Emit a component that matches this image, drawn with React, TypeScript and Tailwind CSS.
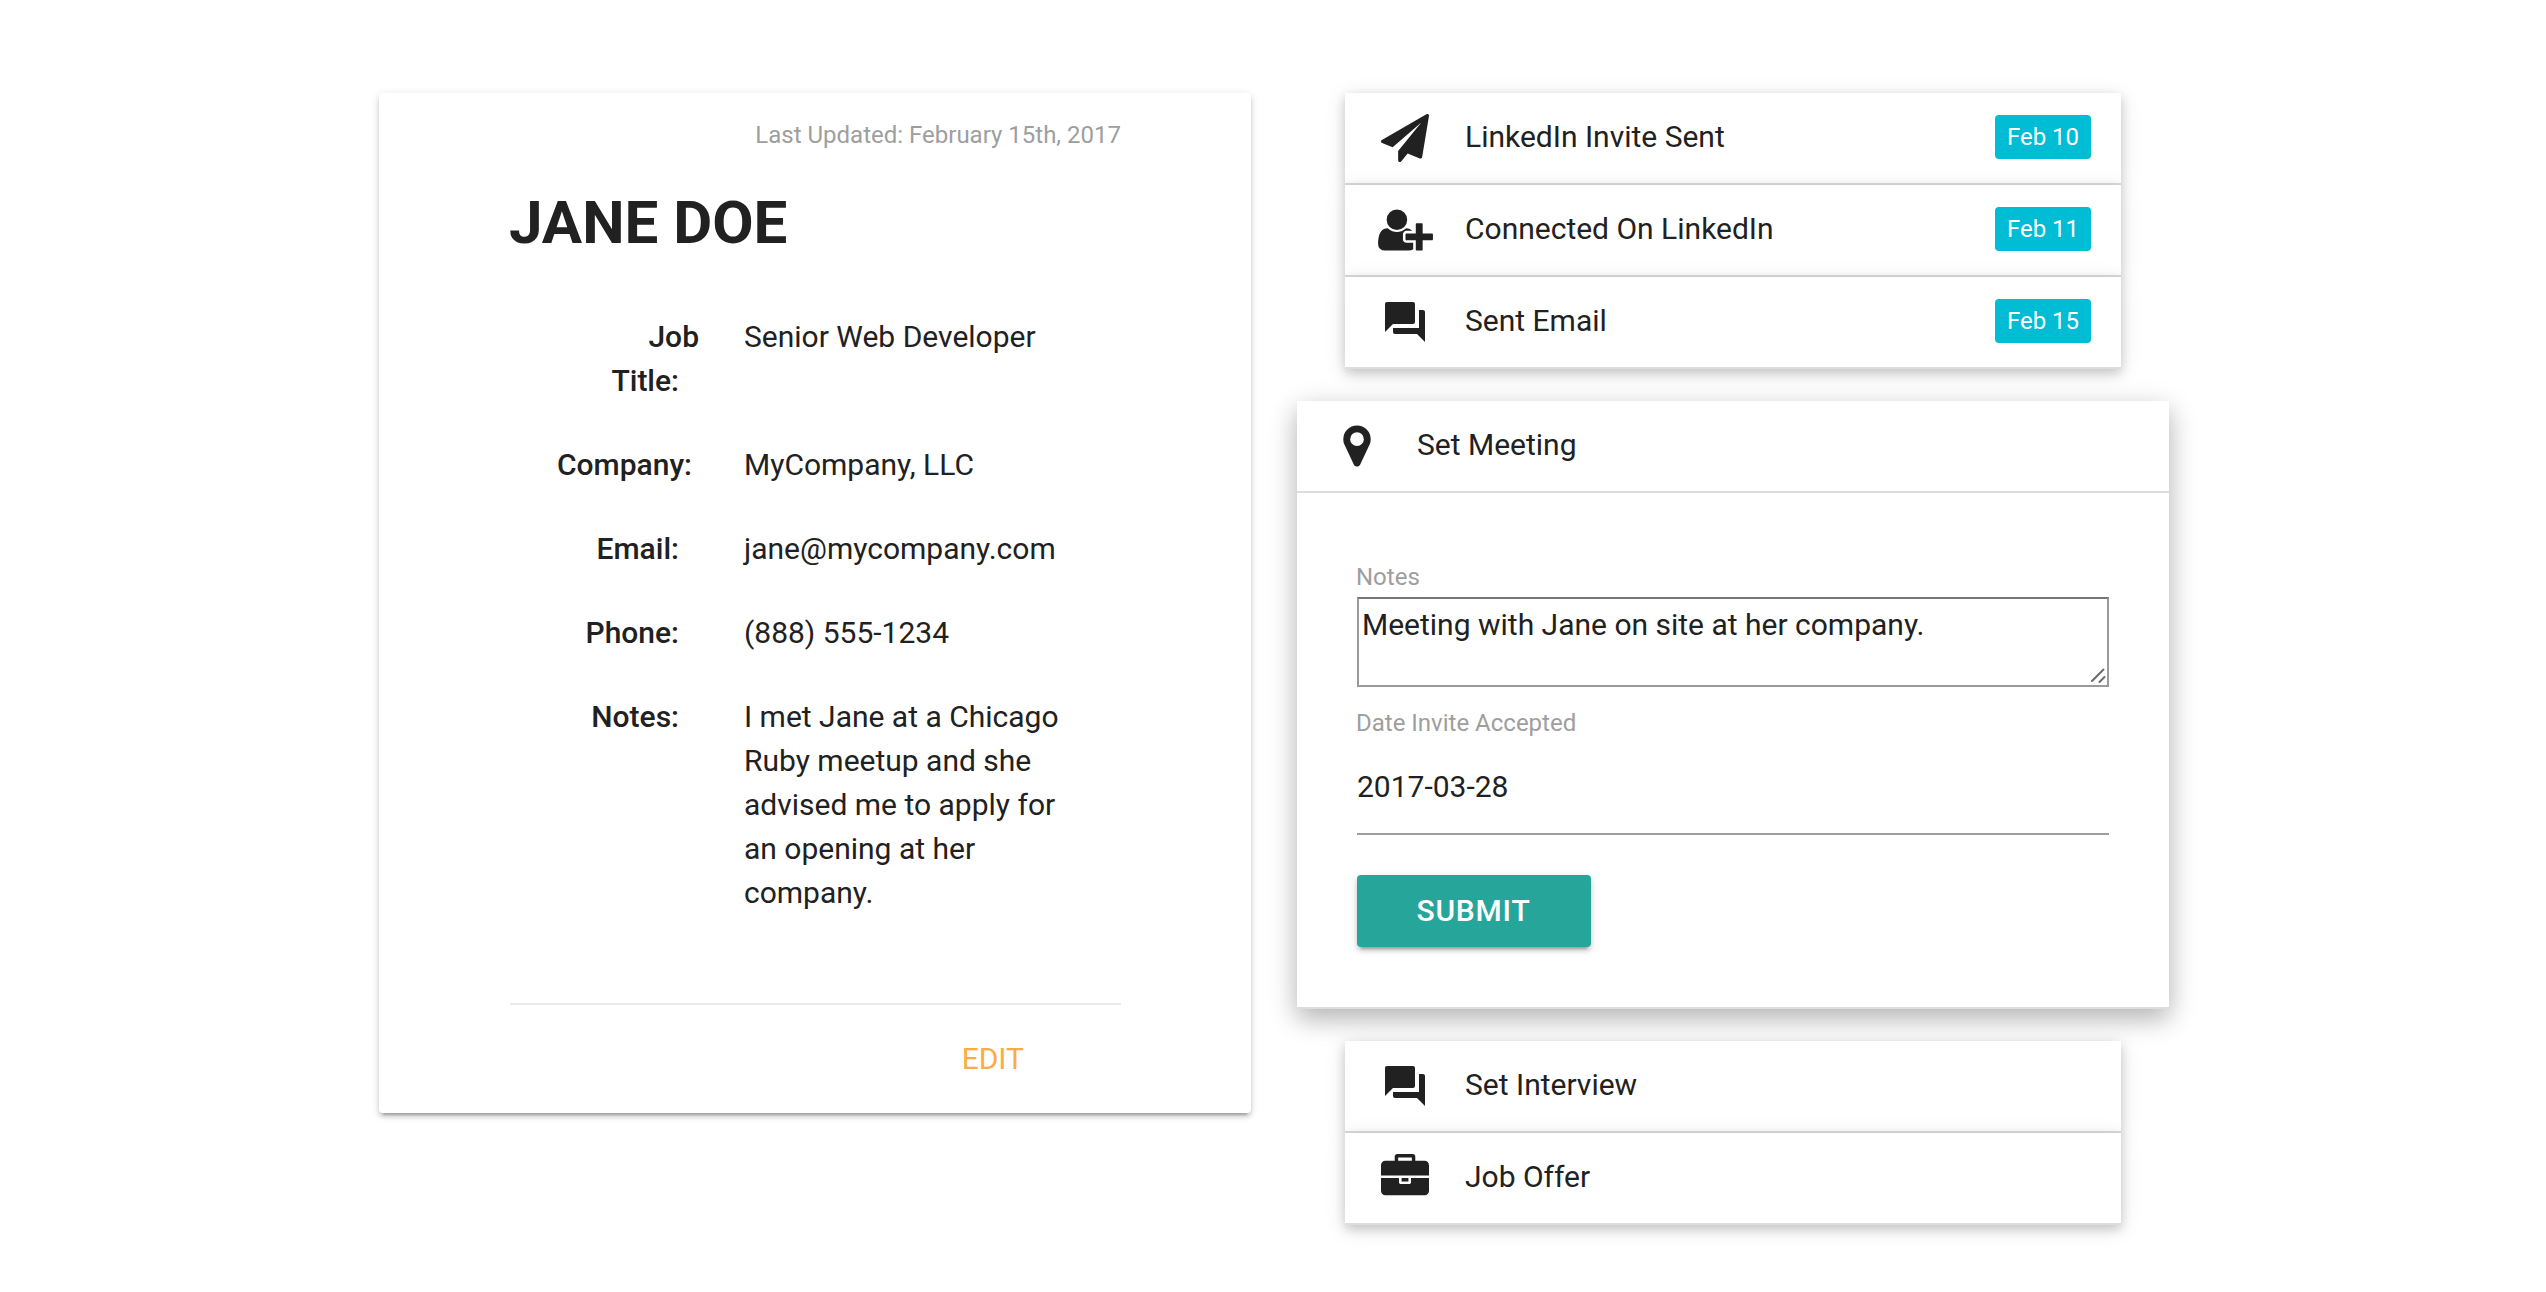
import type { ReactNode } from "react";

function Glyph({ viewBox, width = 48, children }: { viewBox: string; width?: number; children: ReactNode }) {
  return (
    <svg viewBox={viewBox} width={width} height={48} fill="currentColor" className="shrink-0">
      {children}
    </svg>
  );
}

const PaperPlane = () => (
  <Glyph viewBox="0 0 1792 1792">
    <path d="M1764 11q33 24 27 64l-256 1536q-5 29-32 45-14 8-31 8-11 0-24-5l-453-185-242 295q-18 23-49 23-13 0-22-4-19-7-30.5-23.5t-11.5-36.5v-349l864-1059-1069 925-395-162q-37-14-40-55-2-40 32-59l1664-960q15-9 32-9 20 0 36 11z" />
  </Glyph>
);

const UserPlus = () => (
  <Glyph viewBox="0 0 2048 1792" width={55}>
    <path d="M704 896q-159 0-271.5-112.5t-112.5-271.5 112.5-271.5 271.5-112.5 271.5 112.5 112.5 271.5-112.5 271.5-271.5 112.5zm960 128h352q13 0 22.5 9.5t9.5 22.5v192q0 13-9.5 22.5t-22.5 9.5h-352v352q0 13-9.5 22.5t-22.5 9.5h-192q-13 0-22.5-9.5t-9.5-22.5v-352h-352q-13 0-22.5-9.5t-9.5-22.5v-192q0-13 9.5-22.5t22.5-9.5h352v-352q0-13 9.5-22.5t22.5-9.5h192q13 0 22.5 9.5t9.5 22.5v352zm-736 224q0 52 38 90t90 38h256v238q-68 50-171 50h-874q-121 0-194-69t-73-190q0-53 3.5-103.5t14-109 26.5-108.5 43-97.5 62-81 85.5-53.5 111.5-20q19 0 39 17 79 61 154.5 91.5t164.5 30.5 164.5-30.5 154.5-91.5q20-17 39-17 132 0 217 96h-223q-52 0-90 38t-38 90v192z" />
  </Glyph>
);

const Chat = () => (
  <Glyph viewBox="0 0 24 24">
    <path d="M21 6h-2v9H6v2c0 .55.45 1 1 1h11l4 4V7c0-.55-.45-1-1-1zm-4 6V3c0-.55-.45-1-1-1H3c-.55 0-1 .45-1 1v14l4-4h10c.55 0 1-.45 1-1z" />
  </Glyph>
);

const Pin = () => (
  <Glyph viewBox="0 0 1792 1792">
    <path d="M1152 640q0-106-75-181t-181-75-181 75-75 181 75 181 181 75 181-75 75-181zm256 0q0 109-33 179l-364 774q-16 33-47.5 52t-67.5 19-67.5-19-46.5-52l-365-774q-33-70-33-179 0-212 150-362t362-150 362 150 150 362z" />
  </Glyph>
);

const Briefcase = () => (
  <Glyph viewBox="0 0 1792 1792">
    <path d="M640 256h512v-128h-512v128zm1152 640v480q0 66-47 113t-113 47h-1472q-66 0-113-47t-47-113v-480h672v160q0 26 19 45t45 19h320q26 0 45-19t19-45v-160h672zm-768 0v128h-256v-128h256zm768-480v384h-1792v-384q0-66 47-113t113-47h352v-160q0-40 28-68t68-28h576q40 0 68 28t28 68v160h352q66 0 113 47t47 113z" />
  </Glyph>
);

function Header({ icon, title, date }: { icon: ReactNode; title: string; date?: string }) {
  return (
    <div className="flex h-[92px] items-start border-b-2 border-[#ddd] bg-white px-[30px]">
      <div className="flex h-full w-[60px] shrink-0 justify-center pt-[20.5px]">{icon}</div>
      <div className="ml-[30px] flex-1 leading-[87px]">{title}</div>
      {date && (
        <span className="mt-[22px] h-11 w-24 rounded-[4px] bg-[#00bcd4] text-center text-2xl leading-[44px] text-white">
          {date}
        </span>
      )}
    </div>
  );
}

function Step(props: { icon: ReactNode; title: string; date?: string }) {
  return (
    <li className="shadow-[0_4px_10px_rgba(0,0,0,0.16),0_4px_20px_rgba(0,0,0,0.12)]">
      <Header {...props} />
    </li>
  );
}

function Detail({ label, children }: { label: ReactNode; children: ReactNode }) {
  return (
    <div className="grid grid-cols-[189px_330px] gap-x-[45px]">
      <div className="text-right font-medium">{label}</div>
      <div>{children}</div>
    </div>
  );
}

export default function App() {
  return (
    <div className="flex min-h-[1292px] items-start bg-white pt-[93px] pl-[379px] font-['Roboto',sans-serif] text-[30px] leading-[44px] text-[#212121]">
      <section className="h-[1020px] w-[872px] shrink-0 rounded-[4px] bg-white pt-6 pr-[130px] pl-[131px] shadow-[0_4px_4px_0_rgba(0,0,0,0.14),0_2px_10px_0_rgba(0,0,0,0.12),0_6px_2px_-4px_rgba(0,0,0,0.2)]">
        <p className="text-right text-2xl leading-9 text-[#9e9e9e]">Last Updated: February 15th, 2017</p>
        <h1 className="-ml-px mt-9 text-[60px] leading-[67px] font-bold">JANE DOE</h1>
        <div className="mt-[59px] flex flex-col gap-10">
          <Detail
            label={
              <>
                <div>Job</div>
                <div className="pr-5">Title:</div>
              </>
            }
          >
            Senior Web Developer
          </Detail>
          <Detail label={<div className="pr-[7px]">Company:</div>}>MyCompany, LLC</Detail>
          <Detail label={<div className="pr-5">Email:</div>}>jane@mycompany.com</Detail>
          <Detail label={<div className="pr-5">Phone:</div>}>(888) 555-1234</Detail>
          <Detail label={<div className="pr-5">Notes:</div>}>
            I met Jane at a Chicago Ruby meetup and she advised me to apply for an opening at her company.
          </Detail>
        </div>
        <div className="mt-[88px] border-t-2 border-[#ebebeb] pt-8 pr-[97px] text-right text-[#ffab40]">EDIT</div>
      </section>

      <div className="ml-[46px] flex w-[872px] shrink-0 flex-col gap-8">
        <ul className="mx-12">
          <Step icon={<PaperPlane />} title="LinkedIn Invite Sent" date="Feb 10" />
          <Step icon={<UserPlus />} title="Connected On LinkedIn" date="Feb 11" />
          <Step icon={<Chat />} title="Sent Email" date="Feb 15" />
        </ul>

        <div className="bg-white shadow-[0_10px_22px_rgba(0,0,0,0.18),0_8px_30px_rgba(0,0,0,0.15)]">
          <Header icon={<Pin />} title="Set Meeting" />
          <div className="border-b-2 border-[#ddd] px-[60px] pt-[66px] pb-[60px]">
            <div className="-ml-px text-2xl leading-9 text-[#9e9e9e]">Notes</div>
            <div className="relative mt-0.5 h-[90px] border-2 border-[#9a9a9a] border-t-[#767676] pt-[3px] pl-[3px] leading-[45px]">
              Meeting with Jane on site at her company.
              <svg
                width="16"
                height="16"
                viewBox="0 0 16 16"
                className="absolute right-px bottom-px"
                fill="none"
                stroke="#6b6b6b"
                strokeWidth="2"
                strokeLinecap="round"
              >
                <path d="M2 13 L13.5 1.5 M9.5 14 L14.5 9" />
              </svg>
            </div>
            <div className="-ml-px mt-[18px] text-2xl leading-9 text-[#9e9e9e]">Date Invite Accepted</div>
            <div className="mt-6 border-b-2 border-[#9e9e9e] pb-6">2017-03-28</div>
            <button className="mt-10 block h-[72px] w-[234px] rounded-[4px] bg-[#26a69a] pr-px text-center leading-[70px] font-medium tracking-[0.8px] text-white shadow-[0_4px_4px_0_rgba(0,0,0,0.14),0_2px_10px_0_rgba(0,0,0,0.12),0_6px_2px_-4px_rgba(0,0,0,0.2)]">
              SUBMIT
            </button>
          </div>
        </div>

        <ul className="mx-12">
          <Step icon={<Chat />} title="Set Interview" />
          <Step icon={<Briefcase />} title="Job Offer" />
        </ul>
      </div>
    </div>
  );
}
